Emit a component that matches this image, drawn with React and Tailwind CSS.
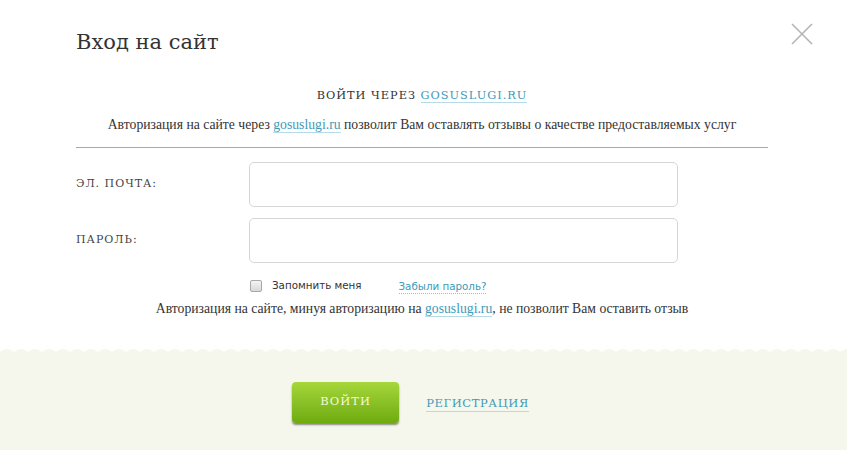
import React from "react";

export default function App() {
  const serif = { fontFamily: '"DejaVu Serif", "Liberation Serif", serif' };
  return (
    <div className="w-[847px] h-[450px] bg-white relative overflow-hidden" style={{ fontFamily: '"Liberation Serif", serif' }}>
      <button className="absolute left-[790px] top-[22px] w-[24px] h-[24px]">
        <svg width="24" height="24" viewBox="0 0 24 24">
          <path d="M2 2 L22 22 M22 2 L2 22" stroke="#b5b5b5" strokeWidth="1.6" />
        </svg>
      </button>
      <div className="px-[76px] pt-[27px]">
        <h1 className="text-[21px] leading-[30px] text-[#333]" style={serif}>Вход на сайт</h1>
        <div className="w-[692px]">
          <div className="mt-[30px] text-center text-[11.3px] tracking-[1px] text-[#333] leading-[18px]" style={serif}>
            ВОЙТИ ЧЕРЕЗ <span className="text-[#3d9ab8] border-b border-[#b7dbe6]">GOSUSLUGI.RU</span>
          </div>
          <div className="mt-[11px] text-center text-[13.7px] text-[#333] leading-[18px]">
            Авторизация на сайте через <span className="text-[#3d9ab8] border-b border-[#b7dbe6]">gosuslugi.ru</span> позволит Вам оставлять отзывы о качестве предоставляемых услуг
          </div>
          <div className="mt-[13px] h-px bg-[#a9a9a9]" />
        </div>
        <div className="mt-[14px] flex flex-col gap-[11px]">
          <div className="flex items-center">
            <div className="w-[173px] text-[11px] tracking-[1px] text-[#444]" style={serif}>ЭЛ. ПОЧТА:</div>
            <div className="w-[429px] h-[45px] border border-[#d6d6d6] rounded-[5px] bg-white" />
          </div>
          <div className="flex items-center">
            <div className="w-[173px] text-[11px] tracking-[1px] text-[#444]" style={serif}>ПАРОЛЬ:</div>
            <div className="w-[429px] h-[45px] border border-[#d6d6d6] rounded-[5px] bg-white" />
          </div>
        </div>
        <div className="mt-[14px] ml-[174px] flex items-center h-[18px]" style={{ fontFamily: '"DejaVu Sans", sans-serif' }}>
          <div className="w-[12px] h-[12px] border border-[#a8a8a8] rounded-[2px] bg-gradient-to-b from-[#f4f4f4] to-[#d8d8d8]" />
          <span className="ml-[10px] text-[10.3px] text-[#333]">Запомнить меня</span>
          <span className="ml-[37px] text-[10.3px] text-[#3d9ab8] border-b border-dotted border-[#8fc4d6] leading-[14px]">Забыли пароль?</span>
        </div>
        <div className="w-[692px] mt-[5px] text-center text-[13.7px] text-[#333] leading-[18px]">
          Авторизация на сайте, минуя авторизацию на <span className="text-[#3d9ab8] border-b border-[#b7dbe6]">gosuslugi.ru</span>, не позволит Вам оставить отзыв
        </div>
      </div>
      <div className="absolute left-0 right-0 top-[346px] h-[6px]">
        <svg width="847" height="6" viewBox="0 0 847 6" preserveAspectRatio="none">
          <defs>
            <pattern id="sc" width="14" height="6" patternUnits="userSpaceOnUse">
              <path d="M0 6 Q7 0 14 6 Z" fill="#f6f7ec" />
            </pattern>
          </defs>
          <rect width="847" height="6" fill="url(#sc)" />
        </svg>
      </div>
      <div className="absolute left-0 right-0 top-[352px] bottom-0 bg-[#f6f7ec] flex justify-center">
        <div className="flex items-center gap-[27px] mt-[29px] h-[42px] ml-[-26px]">
          <div className="w-[107px] h-[41px] rounded-[4px] bg-gradient-to-b from-[#a6d73a] to-[#6eab0c] shadow-[0_2px_2px_rgba(0,0,0,0.45)] flex items-center justify-center text-[11.5px] tracking-[1px] text-[#f3f9d9]" style={serif}>
            ВОЙТИ
          </div>
          <span className="text-[11.5px] tracking-[0.6px] text-[#3d9ab8] border-b border-[#b7dbe6] leading-[16px] mt-[2px]" style={serif}>РЕГИСТРАЦИЯ</span>
        </div>
      </div>
    </div>
  );
}
